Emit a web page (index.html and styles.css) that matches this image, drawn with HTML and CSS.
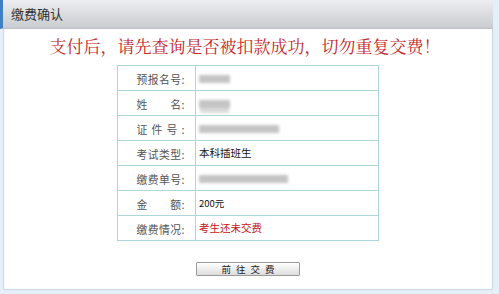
FILE: index.html
```html
<!DOCTYPE html>
<html lang="zh">
<head>
<meta charset="utf-8">
<link rel="stylesheet" href="styles.css">
</head>
<body>
<div class="frame">
  <div class="header">缴费确认</div>
  <div class="content">
    <div class="notice">支付后，请先查询是否被扣款成功，切勿重复交费！</div>
    <table class="info">
      <tr><td class="lbl"><span class="lt">预报名号:</span></td><td class="val"><span class="blur w31"></span></td></tr>
      <tr><td class="lbl"><span class="lt">姓　　名:</span></td><td class="val"><span class="blur w31 tall"></span></td></tr>
      <tr><td class="lbl"><span class="lt">证件号:</span></td><td class="val"><span class="blur w80"></span></td></tr>
      <tr><td class="lbl"><span class="lt">考试类型:</span></td><td class="val">本科插班生</td></tr>
      <tr><td class="lbl"><span class="lt">缴费单号:</span></td><td class="val"><span class="blur w89"></span></td></tr>
      <tr><td class="lbl"><span class="lt">金　　额:</span></td><td class="val small">200元</td></tr>
      <tr><td class="lbl"><span class="lt">缴费情况:</span></td><td class="val red">考生还未交费</td></tr>
    </table>
    <div class="actions"><button class="btn">前往交费</button></div>
  </div>
</div>
</body>
</html>
```
FILE: styles.css
```css
html, body {
  margin: 0;
  padding: 0;
}
body {
  width: 499px;
  height: 294px;
  background: #e6eff8;
  font-family: "Noto Sans CJK SC", "Noto Sans", sans-serif;
  overflow: hidden;
}
.frame {
  width: 493px;
  height: 290px;
  display: flex;
  flex-direction: column;
}
.header {
  height: 29px;
  box-sizing: border-box;
  border-left: 3px solid #3f7fc4;
  background: linear-gradient(#eceef0, #c9ccd0);
  border-bottom: 1px solid #b9bec4;
  padding-left: 8px;
  font-size: 13px;
  line-height: 28px;
  color: #333;
}
.content {
  flex: 1;
  margin-left: 3px;
  background: #fff;
  border-left: 1px solid #c8d8e6;
  border-right: 1px solid #c8d8e6;
  border-bottom: 1px solid #c8d8e6;
  display: flex;
  flex-direction: column;
  align-items: center;
}
.notice {
  height: 36px;
  line-height: 34px;
  font-size: 17px;
  color: #c3272b;
  font-family: "Noto Serif CJK SC", "Noto Sans CJK SC", serif;
  margin-left: -6px;
}
.info {
  border-collapse: collapse;
  width: 262px;
}
.info td {
  border: 1px solid #acd6dc;
  height: 24px;
  padding: 0;
  font-size: 11px;
  line-height: 14px;
}
.lbl {
  width: 77px;
  text-align: center;
  color: #555;
}
.lt {
  display: inline-block;
  width: 48px;
  font-size: 10.8px;
  text-align: justify;
  text-align-last: justify;
  margin-left: 8px;
  vertical-align: middle;
}
.val {
  padding-left: 3px !important;
  color: #111;
  font-size: 10.5px !important;
}
.val.small {
  font-size: 9.5px !important;
}
.val.red {
  color: #c81414;
}
.blur {
  display: inline-block;
  height: 8px;
  background: #c4c4c4;
  filter: blur(1.8px);
  vertical-align: middle;
}
.blur.tall {
  box-shadow: 0 6px 0 -1px #dadada;
}
.w31 { width: 31px; }
.w80 { width: 80px; }
.w89 { width: 89px; }
.actions {
  margin-top: 13px;
}
.btn {
  width: 104px;
  height: 14px;
  padding: 0;
  border: 1px solid #9a9a9a;
  border-radius: 1px;
  background: linear-gradient(#ffffff, #dcdcdc);
  font-family: "Noto Sans CJK SC", sans-serif;
  font-size: 9.5px;
  line-height: 12px;
  letter-spacing: 5px;
  text-indent: 5px;
  color: #222;
}
```
